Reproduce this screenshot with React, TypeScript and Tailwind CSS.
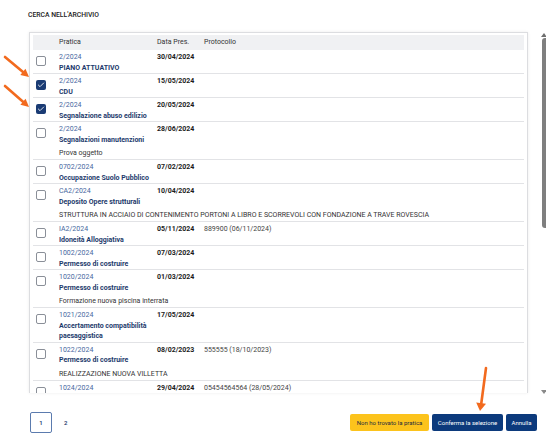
import { Check } from "lucide-react";

type Row = {
  num: string;
  name: string;
  date: string;
  prot?: string;
  desc?: string;
  checked?: boolean;
};

const rows: Row[] = [
  { num: "2/2024", name: "PIANO ATTUATIVO", date: "30/04/2024" },
  { num: "2/2024", name: "CDU", date: "15/05/2024", checked: true },
  { num: "2/2024", name: "Segnalazione abuso edilizio", date: "20/05/2024", checked: true },
  { num: "2/2024", name: "Segnalazioni manutenzioni", date: "28/06/2024", desc: "Prova oggetto" },
  { num: "0702/2024", name: "Occupazione Suolo Pubblico", date: "07/02/2024" },
  {
    num: "CA2/2024",
    name: "Deposito Opere strutturali",
    date: "10/04/2024",
    desc: "STRUTTURA IN ACCIAIO DI CONTENIMENTO PORTONI A LIBRO E SCORREVOLI CON FONDAZIONE A TRAVE ROVESCIA",
  },
  { num: "IA2/2024", name: "Idoneità Alloggiativa", date: "05/11/2024", prot: "889900 (06/11/2024)" },
  { num: "1002/2024", name: "Permesso di costruire", date: "07/03/2024" },
  { num: "1020/2024", name: "Permesso di costruire", date: "01/03/2024", desc: "Formazione nuova piscina interrata" },
  { num: "1021/2024", name: "Accertamento compatibilità paesaggistica", date: "17/05/2024" },
  {
    num: "1022/2024",
    name: "Permesso di costruire",
    date: "08/02/2023",
    prot: "555555 (18/10/2023)",
    desc: "REALIZZAZIONE NUOVA VILLETTA",
  },
  { num: "1024/2024", name: "Permesso di costruire", date: "29/04/2024", prot: "05454564564 (28/05/2024)" },
];

function Checkbox({ checked }: { checked?: boolean }) {
  return checked ? (
    <span className="mt-[4px] ml-[3px] flex h-[10px] w-[10px] items-center justify-center rounded-[2px] bg-[#1a3b74]">
      <Check className="h-[8px] w-[8px] text-white" strokeWidth={2.5} />
    </span>
  ) : (
    <span className="mt-[4px] ml-[3px] block h-[10px] w-[10px] rounded-[2px] border border-[#8a8f98] bg-white" />
  );
}

// frecce arancioni sovrapposte (annotazioni dello screenshot)
function Arrows() {
  return (
    <svg className="pointer-events-none absolute inset-0" width="546" height="445">
      <g stroke="#f26a1e" strokeWidth="2.6" strokeLinecap="round" fill="#f26a1e">
        <line x1="5" y1="57" x2="23" y2="72" />
        <polygon points="29,77 20.3,75 25.5,68.8" stroke="none" />
        <line x1="5" y1="86" x2="23" y2="101.7" />
        <polygon points="29,107 20.4,104.7 25.6,98.7" stroke="none" />
        <line x1="486" y1="368" x2="481.2" y2="404" />
        <polygon points="480,411 476.2,402.4 486,403.8" stroke="none" />
      </g>
    </svg>
  );
}

export default function App() {
  return (
    <div className="relative h-[445px] w-[546px] overflow-hidden bg-white font-['Roboto',sans-serif] text-[#333]">
      <div className="flex">
        <div className="flex-1 pl-[28px] pr-[4px]">
          <h2 className="pt-[12px] text-[6.8px] font-medium leading-[7px] text-[#222]">CERCA NELL'ARCHIVIO</h2>

          {/* pannello risultati */}
          <div className="mt-[13px] ml-[1px] h-[361px] w-[499px] overflow-hidden border-x border-t border-[#dcdde0] px-[3px] pt-[2px] shadow-[0_0_3px_rgba(0,0,0,0.08)]">
            <div className="grid h-[15px] grid-cols-[26px_98px_47px_1fr] items-center bg-[#f0f1f3] text-[7px]">
              <span />
              <span>Pratica</span>
              <span>Data Pres.</span>
              <span>Protocollo</span>
            </div>
            {rows.map((r, i) => (
              <div
                key={i}
                className="grid grid-cols-[26px_98px_47px_1fr] border-b border-[#e2e3e6] pt-[2px] text-[7px] leading-[10.5px]"
              >
                <div>
                  <Checkbox checked={r.checked} />
                </div>
                <div className="pr-[8px]">
                  <div className="text-[#46679e]">{r.num}</div>
                  <div className="font-bold text-[#1d3a6c]">{r.name}</div>
                </div>
                <div className="font-bold text-[#1c1c1c]">{r.date}</div>
                <div className="text-[#444]">{r.prot}</div>
                {r.desc && (
                  <div className="col-span-3 col-start-2 mt-[3px] h-[11px] text-[#333]">{r.desc}</div>
                )}
              </div>
            ))}
          </div>

          {/* paginazione e azioni */}
          <div className="mt-[19px] ml-[2px] flex items-center">
            <span className="flex h-[21px] w-[22px] items-center justify-center rounded-[2px] border border-[#5b7bae] text-[6px] font-semibold text-[#1d3a6c]">
              1
            </span>
            <span className="ml-[12px] text-[6px] font-semibold text-[#1d3a6c]">2</span>
            <div className="ml-auto flex gap-[3px]">
              <button className="h-[17px] w-[79px] rounded-[2px] bg-[#fcc31c] text-[6px] text-[#1d2a3d]">
                Non ho trovato la pratica
              </button>
              <button className="h-[17px] w-[71px] rounded-[2px] bg-[#0c3a7c] text-[6px] text-white">
                Conferma la selezione
              </button>
              <button className="h-[17px] w-[31px] rounded-[2px] bg-[#0c3a7c] text-[6px] text-white">
                Annulla
              </button>
            </div>
          </div>
        </div>

        {/* barra di scorrimento */}
        <div className="flex w-[5px] flex-col items-center pt-[33px]">
          <span className="h-0 w-0 border-x-[3px] border-b-[4px] border-x-transparent border-b-[#6e6e6e]" />
          <span className="mt-[1px] ml-[2px] h-[190px] w-[6px] rounded-[3px] bg-[#7f7f7f]" />
          <span className="mt-[162px] h-0 w-0 border-x-[3px] border-t-[4px] border-x-transparent border-t-[#8a8a8a]" />
        </div>
      </div>
      <Arrows />
    </div>
  );
}
